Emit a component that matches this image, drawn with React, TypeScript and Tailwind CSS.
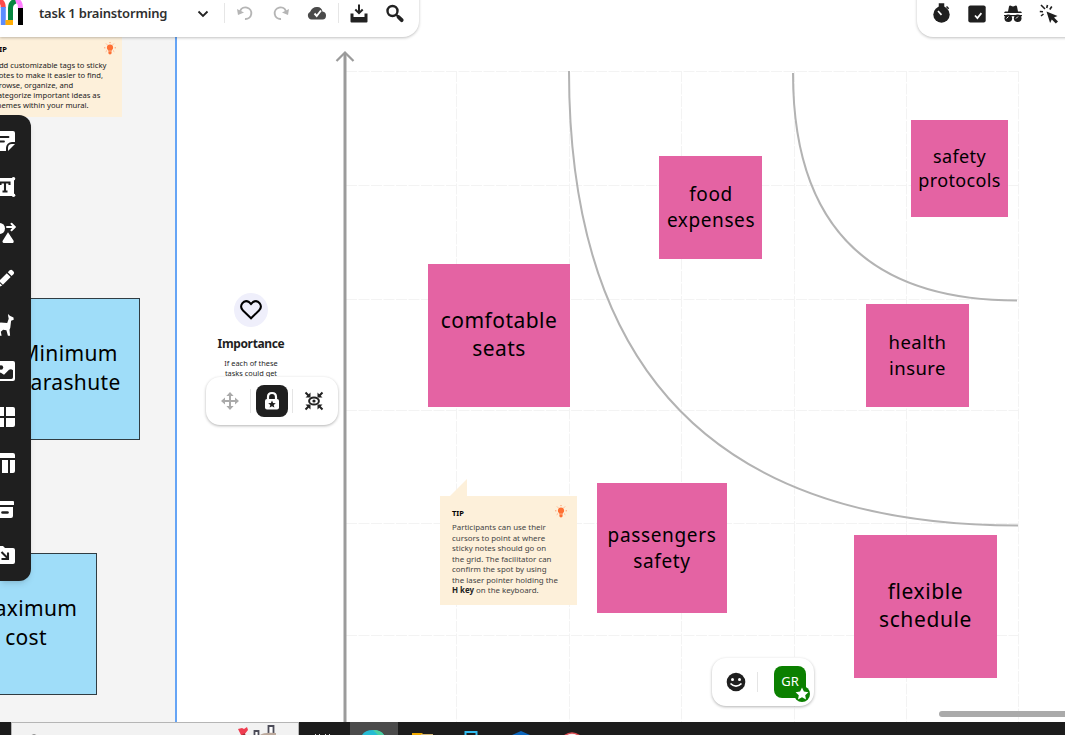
import React from "react";

type Kids = { children: React.ReactNode };

const noto = "font-['Noto_Sans',sans-serif]";

function Sticky({ className, children }: { className: string } & Kids) {
  return (
    <div className={`absolute flex items-center justify-center text-center whitespace-nowrap text-black ${className}`}>
      <div>{children}</div>
    </div>
  );
}

function Icon({ className = "size-5", children }: { className?: string } & Kids) {
  return (
    <svg viewBox="0 0 20 20" className={`shrink-0 overflow-visible ${className}`} fill="currentColor">
      {children}
    </svg>
  );
}

function Bulb({ className }: { className: string }) {
  return (
    <svg viewBox="0 0 12 13" className={`absolute h-[13px] w-3 text-[#ff7033] ${className}`} fill="currentColor">
      <path d="M6 2.6a3.1 3.1 0 0 0-3.1 3.1c0 1.4.9 1.9 1.4 3h3.4c.5-1.1 1.4-1.6 1.4-3A3.1 3.1 0 0 0 6 2.6ZM4.400 9.200h3.200v1.500c0 1.200-.7 1.700-1.600 1.700s-1.600-.5-1.600-1.700Z" />
      <path d="M6 .1v1M2.2 1.7l.8.8M9.8 1.7l-.8.8M.2 5.8h1.1M10.7 5.8h1.1M1.8 9.6l.8-.7M10.2 9.6l-.8-.7" stroke="currentColor" strokeWidth=".8" />
    </svg>
  );
}

function Canvas() {
  return (
    <svg viewBox="0 0 1065 722" className="absolute inset-0 h-[722px] w-[1065px]" fill="none">
      <path
        d="M346 71.5H1018M346 185.5H1018M346 299.5H1018M346 410.5H1018M346 523.5H1018M346 635.5H1018M456.5 71V722M569.5 71V722M681.5 71V722M794.5 71V722M906.5 71V722M1018.5 71V722"
        stroke="#f3f3f3"
        strokeDasharray="11 1.5"
      />
      <path d="M569 71C569 374 718 525.500 1018 525.500" stroke="#b3b3b3" strokeWidth="2" />
      <path d="M793 73C793 224.500 868 300.500 1017 300.500" stroke="#b3b3b3" strokeWidth="2" />
      <path d="M345 722V53" stroke="#9b9b9b" strokeWidth="3" />
      <path d="M336.500 61L345 52.500L353.500 61" stroke="#9b9b9b" strokeWidth="2.200" />
    </svg>
  );
}

function SideBar() {
  return (
    <nav className="absolute top-[115px] left-0 flex h-[466px] w-[31px] flex-col gap-[26px] overflow-hidden rounded-r-xl bg-[#1f1f1f] pt-4 text-white shadow-md">
      <Icon className="-ml-[5px] size-5">
        <path d="M2 0h16a2 2 0 0 1 2 2v9h-3a6 6 0 0 0-6 6v3H2a2 2 0 0 1-2-2V2a2 2 0 0 1 2-2Z" />
        <path d="M13 20v-3a4 4 0 0 1 4-4h3Z" />
        <path d="M4 6h9.500M4 10.500h5" stroke="#1f1f1f" strokeWidth="1.800" strokeLinecap="round" />
      </Icon>
      <Icon className="-ml-[5px] size-5">
        <path d="M1 1h18v18H1Z" />
        <circle cx="18.500" cy="1.700" r="1.800" />
        <circle cx="18.500" cy="18.300" r="1.800" />
        <path d="M5.500 8V5.500h9V8M10 5v9.500M7.500 14.500h5" stroke="#1f1f1f" strokeWidth="2.100" fill="none" />
      </Icon>
      <Icon className="-ml-[5px] size-5">
        <circle cx="4.500" cy="5.500" r="5.500" />
        <path d="m13 9.200 5.600 8.600q.7 1.700-.9 2.200H8.500q-1.800-.6-.8-2.200Z" />
        <path d="M12 4h7.500M16.500.7 19.800 4l-3.300 3.300" stroke="currentColor" strokeWidth="2" fill="none" strokeLinecap="round" />
      </Icon>
      <Icon className="-ml-[5px] size-5">
        <path d="m12.800 3.200 1.900-1.900q1.500-1.200 2.800.1l1 1q1.200 1.400 0 2.800l-1.900 1.900ZM11.800 4.200l3.900 3.900-7.800 7.700L4 11.900ZM3.300 12.700l3.900 3.900-4.200 1.700-1.800-.6Z" />
      </Icon>
      <Icon className="-ml-[5px] size-5">
        <path d="m13.200-1 1.600 1.800 3.700 1.600.2 2.400-2.600.9-.8 7-.8 2 .6 6h-2.200l-1.500-5.400-3.300-.5-2.300 2 .8 4H4.600l-1.400-5.700 1.200-3.600-.8-3 2-.9 6.600.5 1.500-4.300-.6-3Z" />
      </Icon>
      <Icon className="-ml-[5px] size-5">
        <rect width="20" height="20" rx="2" />
        <circle cx="6" cy="6.500" r="2.200" fill="#1f1f1f" />
        <path d="m2 15 3.500-3.500 3.500 2.300 5-5q2-1.500 4 .5v7q0 1.700-1.700 1.700H3.500Q2 18 2 16.300Z" fill="#1f1f1f" />
      </Icon>
      <Icon className="-ml-[5px] size-5">
        <path d="M2 0h7v9H0V2q0-2 2-2ZM11 0h7q2 0 2 2v7h-9ZM0 11h9v9H2q-2 0-2-2ZM11 11h9v7q0 2-2 2h-7Z" />
      </Icon>
      <Icon className="-ml-[5px] size-5">
        <path d="M2 0h16q2 0 2 2v3H0V2q0-2 2-2ZM0 7h5v13H2q-2 0-2-2ZM7 7h6v13H7ZM15 7h5v11q0 2-2 2h-3Z" />
      </Icon>
      <Icon className="-ml-[5px] size-5">
        <path d="M2 2h16q1 0 1 1v3H1V3q0-1 1-1ZM2 8h16v9q0 2-2 2H4q-2 0-2-2Z" />
        <path d="M7.500 13.500h5" stroke="#1f1f1f" strokeWidth="2.600" strokeLinecap="round" />
      </Icon>
      <Icon className="-ml-[5px] size-5">
        <path d="M2 1h6l2 2h8q2 0 2 2v12q0 2-2 2H2q-2 0-2-2V3q0-2 2-2Z" />
        <path d="m6.500 7 6 6M13 7.500V14H6.500" stroke="#1f1f1f" strokeWidth="2.100" fill="none" />
      </Icon>
    </nav>
  );
}

function TopLeft() {
  return (
    <header className="absolute -top-3 left-0 flex h-[49px] w-[419px] items-center rounded-br-2xl bg-white text-[#222] shadow-[0_1px_3px_rgba(0,0,0,0.25)]">
      <svg viewBox="0 0 24 25" className="h-[25px] w-6 shrink-0 overflow-visible" fill="none" strokeWidth="5">
        <path d="M-6 2Q3.300-2 3.300 8" stroke="#ff4b4b" />
        <path d="M3.300 7V25" stroke="#5b8cff" />
        <path d="M13 2Q20.500-2 20.500 9" stroke="#ff80ff" />
        <path d="M20.500 8V25" stroke="#000" />
        <path d="M10.500 21V8Q10.500 2.500 15.500 1" stroke="#078540" />
        <path d="M5.500 22.500H13" stroke="#ffad05" />
      </svg>
      <h1 className={`ml-[15px] w-[129px] shrink-0 text-[13px] leading-5 font-semibold tracking-[-0.200px] whitespace-nowrap text-[#2f2f2f] ${noto}`}>task 1 brainstorming</h1>
      <Icon className="ml-[25px] size-5">
        <path d="m5.500 8.500 4.500 4.500 4.500-4.500" fill="none" stroke="#222" strokeWidth="1.800" />
      </Icon>
      <div className="ml-[11px] h-5 w-px shrink-0 bg-[#e6e6e6]" />
      <Icon className="ml-[10px] size-5 text-[#b5b5b5]">
        <path d="M5 8.500A5.800 5.800 0 1 1 10 16" fill="none" stroke="currentColor" strokeWidth="1.900" />
        <path d="m2 6 1 6 6-2.500Z" />
      </Icon>
      <Icon className="ml-4 size-5 text-[#b5b5b5]">
        <path d="M15 8.500A5.800 5.800 0 1 0 10 16" fill="none" stroke="currentColor" strokeWidth="1.900" />
        <path d="m18 6-1 6-6-2.500Z" />
      </Icon>
      <Icon className="ml-4 size-5 text-[#4a4a4a]">
        <path d="M4.500 16.500A4 4 0 0 1 3 9Q5.500 3.500 10.500 4q4 .2 5 4.500 3.500.5 3.500 4 0 4-3.500 4Z" />
        <path d="m7.500 10.500 2.200 2.500L14 7.500" fill="none" stroke="white" strokeWidth="1.900" />
      </Icon>
      <div className="ml-[11px] h-5 w-px shrink-0 bg-[#e6e6e6]" />
      <Icon className="ml-[10px] size-5">
        <path d="M1.500 10.500h3V14h11v-3.500h3v8q0 1-1 1h-15q-1 0-1-1Z" />
        <path d="M10 1.500v8.500M6.300 6.500l3.700 3.600 3.700-3.600" fill="none" stroke="currentColor" strokeWidth="2" />
      </Icon>
      <Icon className="ml-4 size-5">
        <circle cx="7.500" cy="8" r="5" fill="none" stroke="currentColor" strokeWidth="2.400" />
        <path d="m11.300 11.800 2 2" stroke="currentColor" strokeWidth="2" />
        <path d="m13.500 14 3.200 3.200" stroke="currentColor" strokeWidth="3.800" strokeLinecap="round" />
      </Icon>
    </header>
  );
}

function TopRight() {
  return (
    <div className="absolute -top-3 left-[917px] flex h-[49px] w-[170px] items-center gap-4 rounded-bl-2xl bg-white pl-[14px] text-[#1f1f1f] shadow-[0_1px_3px_rgba(0,0,0,0.25)]">
      <Icon>
        <circle cx="10.500" cy="11.500" r="8.200" />
        <path d="M8.500 1h4v3h-4ZM15.500 3.500l2.200 2.200" stroke="currentColor" strokeWidth="1.500" />
        <path d="m7 8 3.500 3.800" stroke="white" strokeWidth="1.700" />
      </Icon>
      <Icon>
        <rect x="1.300" y="2.500" width="17.400" height="17" rx="2" />
        <path d="m8 12.500 2.400 2.600 4-5" fill="none" stroke="white" strokeWidth="1.700" />
      </Icon>
      <Icon>
        <path d="m5 8.500 1-5q.5-1.500 2-.7 2 1.200 4 0 1.500-.8 2 .7l1 5h3l1 1.500H1l1-1.500ZM1 12h18v1.200H1Z" />
        <circle cx="5.300" cy="15.200" r="3.800" />
        <circle cx="14.700" cy="15.200" r="3.800" />
        <path d="m3.500 15.500 2-2M13 15.500l2-2" stroke="white" />
      </Icon>
      <Icon>
        <path d="m7.500 8.500 11 4.500-3.500 1.500 4 4-2.200 2-4-4-1.700 3.500Z" />
        <path d="M2 2l4 4M8.500 2l-.8 3M.8 8.500l3.200.3M2 13l2.500-2M12.800 3.500l-2 3" stroke="currentColor" strokeWidth="1.600" />
      </Icon>
    </div>
  );
}

function LockBar() {
  return (
    <div className="absolute top-[377px] left-[206px] flex h-12 w-[132px] items-center rounded-[14px] bg-white pl-[14px] shadow-[0_1px_3px_rgba(0,0,0,0.3)]">
      <Icon className="size-5 text-[#aaa]">
        <path d="M10 3v14M3 10h14" stroke="currentColor" strokeWidth="2" />
        <path d="m10 1 3.600 4H6.400ZM10 19l3.600-4H6.400ZM1 10l4-3.600v7.200ZM19 10l-4-3.600v7.200Z" />
      </Icon>
      <div className="ml-[10px] h-6 w-px bg-[#e5e5e5]" />
      <div className="ml-[5px] flex size-8 items-center justify-center rounded-lg bg-[#1f1f1f] text-white">
        <Icon className="size-5">
          <path d="M6 9V6q0-4 4-4t4 4v3" fill="none" stroke="currentColor" strokeWidth="2.200" />
          <rect x="3" y="8" width="14" height="10.500" rx="2" />
          <path d="m10 9.500 1.100 2.500 2.700.2-2.100 1.700.7 2.700-2.400-1.400-2.400 1.400.7-2.700-2.100-1.700 2.700-.2Z" fill="#1f1f1f" />
        </Icon>
      </div>
      <div className="ml-1 h-6 w-px bg-[#e5e5e5]" />
      <Icon className="ml-[11px] size-5 text-[#222]">
        <ellipse cx="10" cy="10" rx="4.900" ry="3.600" fill="none" stroke="currentColor" strokeWidth="2" />
        <circle cx="10" cy="10" r="1.600" />
        <path d="m1.500 1.500 4 4M18.500 1.500l-4 4M1.500 18.500l4-4M18.500 18.500l-4-4" stroke="currentColor" strokeWidth="2" />
        <path d="M6.500 1.500v5h-5ZM13.500 1.500v5h5ZM6.500 18.500v-5h-5ZM13.500 18.500v-5h5Z" />
      </Icon>
    </div>
  );
}

function People() {
  return (
    <div className="absolute top-[658px] left-[712px] flex h-12 w-[102px] items-center rounded-[14px] bg-white pl-[14px] shadow-[0_1px_3px_rgba(0,0,0,0.3)]">
      <Icon className="size-5 text-[#1f1f1f]">
        <circle cx="10" cy="10" r="9.300" />
        <circle cx="6.500" cy="7.500" r="1.500" fill="white" />
        <circle cx="13.500" cy="7.500" r="1.500" fill="white" />
        <path d="M4.500 11.500q5.500 5.500 11 0" fill="none" stroke="white" strokeWidth="1.700" />
      </Icon>
      <div className="ml-[11px] h-5 w-px bg-[#e5e5e5]" />
      <div className={`relative ml-4 flex size-8 items-center justify-center rounded-lg bg-[#0b8000] text-[13px] text-white ${noto}`}>
        GR
        <Icon className="absolute top-5 left-5 size-4">
          <circle cx="10" cy="10" r="10" fill="#0b8000" />
          <path d="m10 2 2.400 5 5.600.7-4 3.800 1 5.500-5-2.800L5 17l1-5.500-4-3.800L7.600 7Z" />
        </Icon>
      </div>
    </div>
  );
}

function TaskBar() {
  return (
    <footer className="flex h-[13px] overflow-hidden bg-[#1c1c1c]">
      <div className="ml-[11px] h-full w-72 border border-b-0 border-[#b5b5b5] bg-[#f2f2f2]">
        <svg viewBox="0 0 286 12" className="h-3 w-[286px]">
          <circle cx="22" cy="17.500" r="5" fill="none" stroke="#222" strokeWidth="2" />
          <path d="m226 6 4-1 2 1 3-2 1 3-4 5-2 2Z" fill="#ef3c50" />
          <path d="m230 13 3-2" stroke="#9b3039" strokeWidth="2" />
          <path d="M242.500 12V8h4v4M256.500 11V3h5v8" stroke="#4b4b58" strokeWidth="1.800" fill="white" />
          <path d="M248 12q4-3 16-2v2Z" fill="#bba89b" />
        </svg>
      </div>
      <svg viewBox="0 0 766 13" className="h-[13px] w-[766px]">
        <path d="M16 12.500h1M20 12.500h1M26 12.500h1M30 12.500h1" stroke="#ddd" />
        <path d="M51 0h48v13H51Z" fill="#4b4b4b" />
        <path d="M63 13q3-5 11-5t11 5Z" fill="#26bbd3" />
        <path d="M74 8q8 0 11 5h-6Z" fill="#4bd0a0" />
        <path d="M113 11h10l2 2h-12Z" fill="#f0a900" />
        <path d="M122 12h12v1h-12Z" fill="#d6b875" />
        <path d="M166.500 13V10h11v3" stroke="#32bdf1" strokeWidth="2" fill="none" />
        <path d="m213 13 9-4 9 4Z" fill="#0b65bc" />
        <path d="M265 14q8-6 16 0Z" fill="#f7eeee" stroke="#dc4a50" strokeWidth="1.500" />
      </svg>
    </footer>
  );
}

export default function App() {
  return (
    <div className={`flex h-[735px] w-[1065px] flex-col overflow-hidden bg-white ${noto}`}>
      <main className="relative h-[722px] overflow-hidden">
        <div className="absolute inset-y-0 left-0 w-[177px] border-r-2 border-[#65a4f5] bg-[#f4f4f4]" />
        <Canvas />

        <div className="absolute top-[30px] left-0 h-[87px] w-[122px] bg-[#fdf0da] text-[7.650px] leading-[10px] whitespace-nowrap text-[#222]">
          <Bulb className="top-3 left-[104px]" />
          <div className="-ml-[5px] pt-[13.500px] text-[7.500px] font-bold text-black">TIP</div>
          <div className="-ml-[6px] pt-[6px]">
            Add customizable tags to sticky<br />notes to make it easier to find,<br />browse, organize, and<br />categorize important ideas as<br />themes within your mural.
          </div>
        </div>

        <Sticky className="top-[298px] -left-[2px] h-[142px] w-[142px] border border-[#303c42] bg-[#9fddf9] pb-[2px] text-[21px] leading-[29px] tracking-[0.350px]">Minimum<br />parashute</Sticky>
        <Sticky className="top-[553px] -left-[45px] h-[142px] w-[142px] border border-[#303c42] bg-[#9fddf9] pb-[2px] text-[21px] leading-[29px] tracking-[0.300px]">maximum<br />cost</Sticky>
        <Sticky className="top-[264px] left-[428px] h-[143px] w-[142px] bg-[#e463a3] pb-[3px] text-[21px] leading-7 tracking-[0.450px]">comfotable<br />seats</Sticky>
        <Sticky className="top-[156px] left-[659px] h-[103px] w-[103px] bg-[#e463a3] pb-px pl-px text-[19px] leading-[26px] tracking-[0.600px]">food<br />expenses</Sticky>
        <Sticky className="top-[120px] left-[911px] h-[97px] w-[97px] bg-[#e463a3] pb-[2px] text-[18px] leading-6 tracking-[0.350px]">safety<br />protocols</Sticky>
        <Sticky className="top-[304px] left-[866px] h-[103px] w-[103px] bg-[#e463a3] pb-[2px] text-[18.500px] leading-[26px] tracking-[0.450px]">health<br />insure</Sticky>
        <Sticky className="top-[483px] left-[597px] h-[130px] w-[130px] bg-[#e463a3] text-[19px] leading-[26px] tracking-[0.650px]">passengers<br />safety</Sticky>
        <Sticky className="top-[535px] left-[854px] h-[143px] w-[143px] bg-[#e463a3] pb-[3px] text-[21px] leading-7 tracking-[0.600px]">flexible<br />schedule</Sticky>

        <section className="absolute top-[293px] left-[206px] flex w-[90px] flex-col items-center text-center text-[#1f1f1f]">
          <div className="flex size-[34px] items-center justify-center rounded-full bg-[#efeffb]">
            <svg viewBox="0 0 22 20" className="h-5 w-[22px]" fill="none" stroke="black" strokeWidth="2">
              <path d="M11 18.300 3 10.500C-1.500 6 3.500-1 9 2l2 2 2-2c5.500-3 10.500 4 6 8.500Z" />
            </svg>
          </div>
          <h2 className="mt-2 text-[12px] leading-[18px] font-bold tracking-[-0.350px]">Importance</h2>
          <p className="mt-[5px] text-[7.400px] leading-[10px] whitespace-nowrap">If each of these<br />tasks could get</p>
        </section>

        <svg viewBox="0 0 17 17" className="absolute top-[479px] left-[450px] size-[17px]" fill="#fdf0da"><path d="M0 17 17 0v17Z" /></svg>
        <div className="absolute top-[496px] left-[440px] h-[109px] w-[137px] bg-[#fdf0da] pl-3 text-[7.900px] leading-[10.500px] whitespace-nowrap text-[#444]">
          <Bulb className="top-[9px] left-[115px]" />
          <div className="pt-[11.500px] text-[7.500px] font-bold text-black">TIP</div>
          <div className="pt-[4px]">
            Participants can use their<br />cursors to point at where<br />sticky notes should go on<br />the grid. The facilitator can<br />confirm the spot by using<br />the laser pointer holding the<br /><b className="text-[#222]">H key</b> on the keyboard.
          </div>
        </div>

        <TopLeft />
        <TopRight />
        <SideBar />
        <LockBar />
        <People />
        <div className="absolute top-[711px] left-[939px] h-[6px] w-[140px] rounded-full bg-[#aaa]" />
      </main>
      <TaskBar />
    </div>
  );
}
